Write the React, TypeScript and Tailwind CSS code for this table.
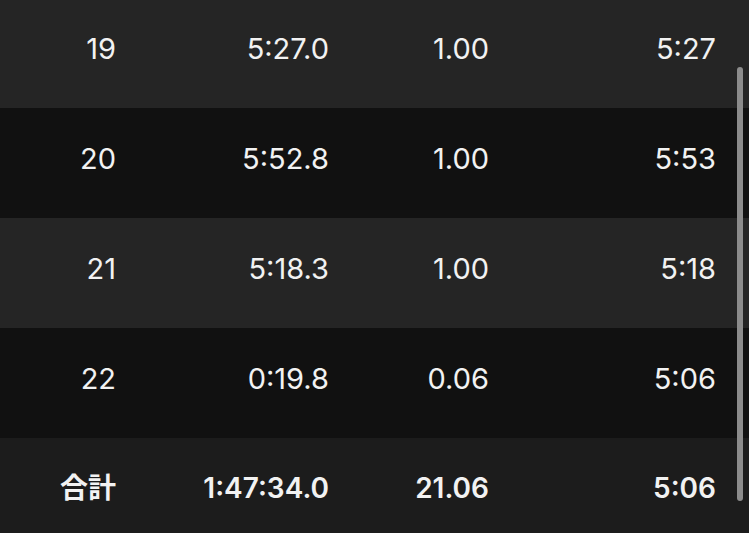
import React from "react";

const rows = [
  ["19", "5:27.0", "1.00", "5:27"],
  ["20", "5:52.8", "1.00", "5:53"],
  ["21", "5:18.3", "1.00", "5:18"],
  ["22", "0:19.8", "0.06", "5:06"],
];

function Row({ cells, bg, bold }: { cells: string[]; bg: string; bold?: boolean }) {
  return (
    <div
      className={`grid grid-cols-[116px_213px_160px_227px_1fr] h-[110px] items-center pb-[10px] text-[#f2f2f2] ${bg} ${bold ? "font-semibold text-[28px]" : "font-normal text-[29px]"}`}
    >
      {cells.map((c, i) => (
        <div key={i} className="text-right leading-none">
          {c}
        </div>
      ))}
      <div />
    </div>
  );
}

export default function App() {
  return (
    <div
      className="relative w-[749px] h-[533px] overflow-hidden bg-[#1c1c1c]"
      style={{ fontFamily: '"Inter", "Noto Sans CJK JP", sans-serif' }}
    >
      <div className="-mt-[2px] flex flex-col">
        <Row cells={rows[0]} bg="bg-[#252525]" />
        <Row cells={rows[1]} bg="bg-[#111111]" />
        <Row cells={rows[2]} bg="bg-[#252525]" />
        <Row cells={rows[3]} bg="bg-[#111111]" />
        <Row cells={["合計", "1:47:34.0", "21.06", "5:06"]} bg="bg-[#1c1c1c]" bold />
      </div>
      <div className="absolute left-[737px] top-[67px] w-[6px] h-[434px] rounded-full bg-[#8c8c8c]" />
    </div>
  );
}
